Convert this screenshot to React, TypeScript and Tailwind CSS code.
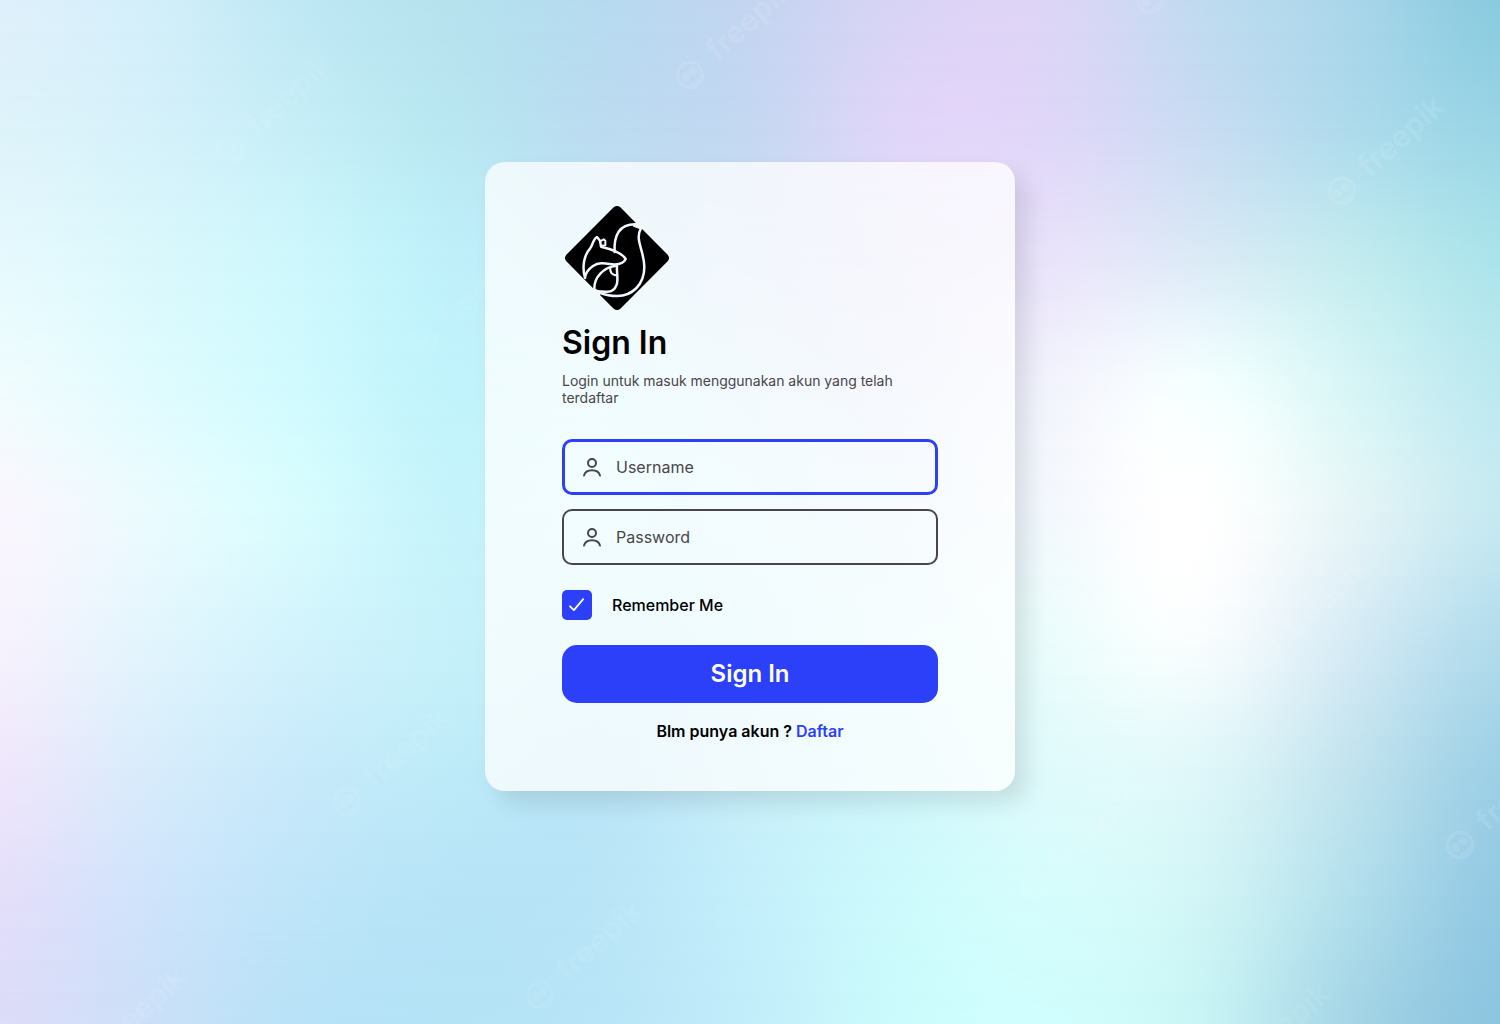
const MESH: string[][] = [
  ['#dff0fb', '#d3effa', '#bfe8f4', '#b6e2ee', '#b7dbf0', '#c4d5f1', '#d8d4f5', '#ddd5f6', '#c0dbf0', '#aad6ea', '#8acbdf'],
  ['#def3fa', '#d5f1fa', '#c6eef7', '#b9e7f1', '#bcdcf1', '#c5d8f2', '#e0d6f9', '#dfd7f8', '#c9dcf2', '#aedbec', '#9ad5e5'],
  ['#e6f9fd', '#daf8fc', '#cdf7fc', '#bff0fa', '#c2e6f6', '#cbdff5', '#dcdcf7', '#e9e3fa', '#dbeaf6', '#c3ebef', '#abe3ea'],
  ['#f0fcfe', '#e0fbfe', '#d0fafe', '#c1f3fb', '#c6f3fb', '#cfeaf9', '#dce6f8', '#f2f3fc', '#f5ffff', '#d8f5f6', '#bce8f0'],
  ['#faf6fe', '#eafbfe', '#d8fcfe', '#c6f3fb', '#c8f6fc', '#d0f2fb', '#dcf0fb', '#f3f8fd', '#ffffff', '#e6f5f7', '#c6e9f1'],
  ['#f6f2fd', '#e2f5fd', '#d2f3fc', '#c6f1fa', '#c2eefa', '#c8f2fb', '#d8f8fb', '#ebfcfc', '#f9fdfe', '#d6ebf5', '#b2dcec'],
  ['#efe7fb', '#d8ecfb', '#c8eafa', '#beebf8', '#bbe6f8', '#c8eff9', '#d0f6fb', '#e0fafb', '#e0f7f9', '#c2e3ee', '#9ed0e6'],
  ['#e4dffa', '#cfe4fb', '#bfe5f9', '#b7e4f7', '#b9e5f7', '#c4effb', '#cdfafc', '#d6fcfc', '#d2f5f6', '#b3dfec', '#93c9e3'],
  ['#dcdcf8', '#cbe0f8', '#b8e2f7', '#b5e3f6', '#b8e5f7', '#c2edfa', '#cbfbfc', '#d0fdfd', '#c8f4f5', '#a5d5e6', '#8cc5e0'],
];

const STEPS = 4;

const spline = (a: number, b: number, c: number, d: number, t: number) =>
  b + 0.5 * t * (c - a + t * (2 * a - 5 * b + 4 * c - d + t * (3 * (b - c) + d - a)));

// Subdivides a list of colours with a Catmull-Rom curve so the blend has no creases.
function refine(points: number[][]): number[][] {
  const last = points.length - 1;
  const out: number[][] = [];
  for (let i = 0; i < last; i++) {
    for (let s = 0; s < STEPS; s++) {
      out.push(
        points[i].map((v, k) =>
          spline(points[Math.max(i - 1, 0)][k], v, points[i + 1][k], points[Math.min(i + 2, last)][k], s / STEPS),
        ),
      );
    }
  }
  out.push(points[last]);
  return out;
}

const toRgb = (hex: string) => [1, 3, 5].map((i) => parseInt(hex.slice(i, i + 2), 16));

const ROWS = refine(MESH.map((row) => refine(row.map(toRgb)).flat())).map((flat) => {
  const stops: string[] = [];
  for (let i = 0; i < flat.length; i += 3) {
    stops.push(`rgb(${flat.slice(i, i + 3).map((v) => Math.max(0, Math.min(255, v)).toFixed(1)).join(' ')})`);
  }
  return `linear-gradient(90deg, ${stops.join(', ')})`;
});

const MARKS: [number, number, number][] = [
  [690, 75, 0.1], [1150, 0, 0.08], [1342, 191, 0.1], [230, 150, 0.07], [423, 342, 0.06], [-45, 425, 0.1], [148, 612, 0.06],
  [347, 802, 0.07], [540, 995, 0.07], [85, 1062, 0.08], [1035, 885, 0.09], [1228, 1078, 0.07], [1267, 652, 0.1], [1460, 845, 0.1],
];

function Backdrop() {
  return (
    <div className="absolute inset-0 flex flex-col overflow-hidden" aria-hidden="true">
      {ROWS.slice(0, -1).map((row, i) => (
        <div key={i} className="flex-1" style={{ backgroundImage: row }}>
          <div
            className="h-full w-full [mask-image:linear-gradient(to_bottom,transparent,black)]"
            style={{ backgroundImage: ROWS[i + 1] }}
          />
        </div>
      ))}
      <svg className="absolute inset-0 h-full w-full" viewBox="0 0 1500 1024" fill="none">
        {MARKS.map(([x, y, opacity]) => (
          <g key={`${x}-${y}`} transform={`translate(${x} ${y}) rotate(-42)`} opacity={opacity}>
            <circle r="12.5" stroke="#fff" strokeWidth="3.5" />
            <circle cx="-5" cy="-1" r="4.5" fill="#fff" />
            <circle cx="5" cy="-1" r="4.5" fill="#fff" />
            <path d="M-6 7q6 4 12 0" stroke="#fff" strokeWidth="2" />
            <path d="M-9 -14l-2 -3M9 -14l2 -3" stroke="#fff" strokeWidth="2" opacity="0.6" />
            <text x="29" y="9" fill="#fff" fontSize="30" fontWeight="600" letterSpacing="0.2" fontFamily="Inter, sans-serif">
              freepik
            </text>
          </g>
        ))}
      </svg>
    </div>
  );
}

function Logo() {
  return (
    <svg className="block size-[110px]" viewBox="15 15 330 330" fill="none">
      <path
        d="M170 28Q180 20 190 28L236 74L226 84L246 98L253 91L332 170Q340 180 332 190L190 332Q180 340 170 332L129 291L132 280L113 275L80 242L28 190Q20 180 28 170Z"
        fill="#000"
      />
      <path d="M222 84L250 94L246 110L210 100Z" fill="#000" />
      <g stroke="#f1f7fe" strokeWidth="7.5" strokeLinecap="round" strokeLinejoin="round">
        <path d="M84 240C74 205 82 170 99 152C107 144 107 124 120 117L129 128L132 146C158 152 193 161 206 183C201 194 187 200 168 199C148 197 128 191 108 204C92 215 85 228 84 240" />
        <path d="M131 129L140 124L145 128L145 142L134 143" strokeWidth="6" />
        <path d="M173 162C170 112 187 78 236 79" />
        <path d="M252 91C232 125 262 158 262 207C262 261 224 294 181 294C160 294 145 291 130 285" />
        <path d="M112 272C111 236 142 208 174 204" />
        <path d="M180 203C178 222 185 242 179 260C173 277 160 283 145 281C132 279 126 283 114 276" />
        <path d="M160 208C158 223 165 231 178 232" strokeWidth="6.5" />
      </g>
    </svg>
  );
}

function UserIcon() {
  return (
    <svg className="block h-5 w-5 shrink-0" viewBox="0 0 20 20" fill="none" stroke="#49454a" strokeWidth="2">
      <circle cx="10" cy="6" r="4" />
      <path d="M2 18.6C3.6 11.4 16.4 11.4 18 18.6" strokeLinecap="round" />
    </svg>
  );
}

export default function App() {
  return (
    <div className="relative flex h-[1024px] w-full justify-center overflow-hidden pt-[162px] font-['Inter',sans-serif] text-black">
      <Backdrop />
      <main className="relative h-[629px] w-[530px] rounded-[20px] bg-white/75 px-[77px] pt-[41px] shadow-[12px_12px_22px_rgba(0,0,0,0.1)]">
        <Logo />
        <h1 className="mt-[9px] text-[32px] leading-[41px] font-semibold">Sign In</h1>
        <p className="mt-[9px] text-[14px] leading-[17px] tracking-[-0.02px] text-[#49454a]">
          Login untuk masuk menggunakan akun yang telah terdaftar
        </p>
        <div className="mt-[33px] flex h-14 items-center gap-[14px] rounded-[10px] border-3 border-[#2b40f8] pl-[17px]">
          <UserIcon />
          <span className="text-base text-[#49454a]">Username</span>
        </div>
        <div className="mt-[14px] flex h-14 items-center gap-[14px] rounded-[10px] border-2 border-[#49454a] pl-[18px]">
          <UserIcon />
          <span className="text-base text-[#49454a]">Password</span>
        </div>
        <div className="mt-[25px] flex items-center gap-5">
          <span className="flex size-[30px] items-center justify-center rounded-[5px] bg-[#2b40f8]">
            <svg className="size-5" viewBox="0 0 20 20" fill="none" stroke="#fff" strokeWidth="1.8" strokeLinecap="round" strokeLinejoin="round">
              <path d="M3 11.3L6.9 15.2L16.2 4.2" />
            </svg>
          </span>
          <span className="text-base font-medium">Remember Me</span>
        </div>
        <button className="mt-[25px] flex h-[58px] w-full items-center justify-center rounded-[15px] bg-[#2b40f8] text-2xl font-semibold text-white">
          Sign In
        </button>
        <p className="mt-4 text-center text-base font-semibold">
          Blm punya akun ? <a className="text-[#2b40f8]">Daftar</a>
        </p>
      </main>
    </div>
  );
}
